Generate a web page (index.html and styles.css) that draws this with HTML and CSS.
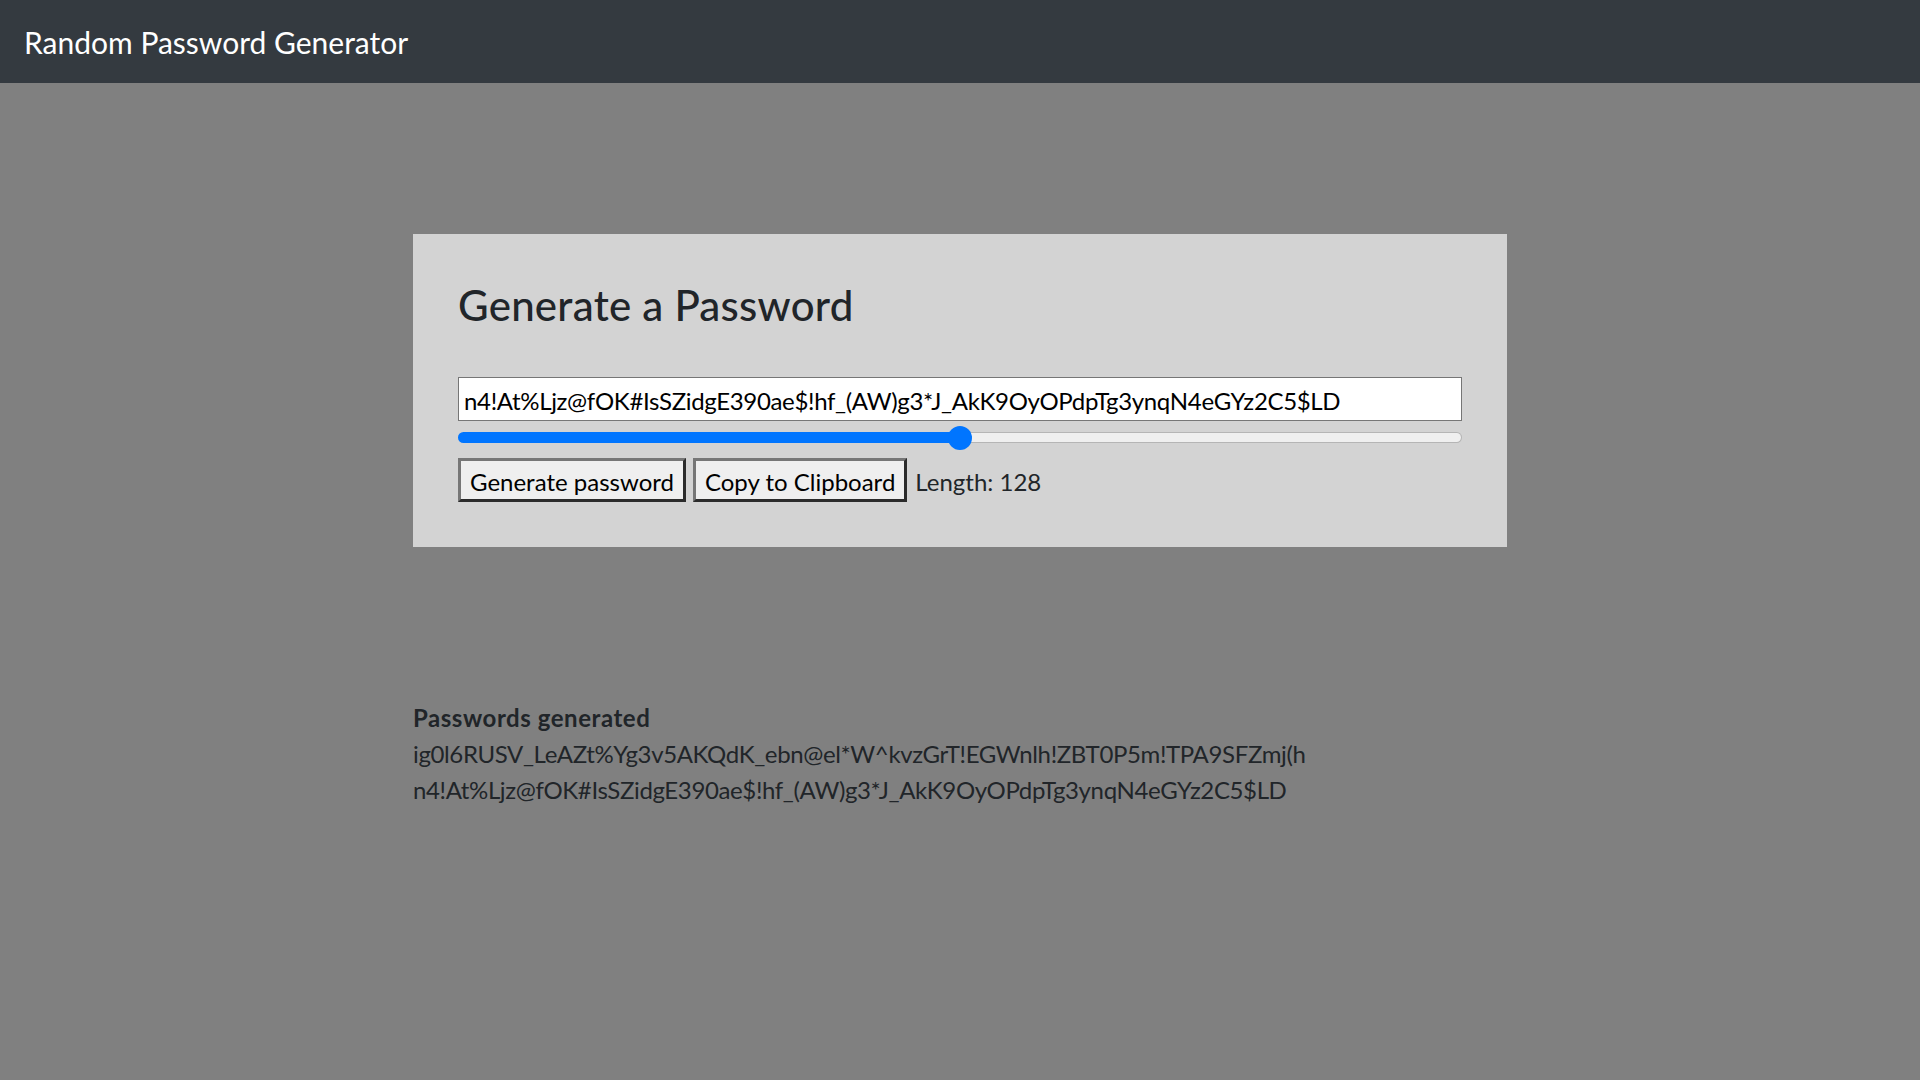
FILE: index.html
```html
<!DOCTYPE html>
<html lang="en">
<head>
<meta charset="utf-8">
<title>Random Password Generator</title>
<link rel="stylesheet" href="styles.css">
</head>
<body>
<nav class="navbar">
  <a class="brand" href="#">Random Password Generator</a>
</nav>
<main class="page">
  <section class="card">
    <h3 class="card-title">Generate a Password</h3>
    <input class="pw-field" type="text" value="n4!At%Ljz@fOK#IsSZidgE390ae$!hf_(AW)g3*J_AkK9OyOPdpTg3ynqN4eGYz2C5$LD">
    <input class="length-range" type="range" min="8" max="248" value="128">
    <div class="actions">
      <button class="btn" type="button">Generate password</button>
      <button class="btn" type="button">Copy to Clipboard</button>
      <span class="length-label">Length: 128</span>
    </div>
  </section>
  <section class="history">
    <div class="history-title">Passwords generated</div>
    <div class="history-item">ig0l6RUSV_LeAZt%Yg3v5AKQdK_ebn@el*W^kvzGrT!EGWnlh!ZBT0P5m!TPA9SFZmj(h</div>
    <div class="history-item">n4!At%Ljz@fOK#IsSZidgE390ae$!hf_(AW)g3*J_AkK9OyOPdpTg3ynqN4eGYz2C5$LD</div>
  </section>
</main>
</body>
</html>
```
FILE: styles.css
```css
* { box-sizing: border-box; }

html, body {
  margin: 0;
  padding: 0;
}

body {
  background: #808080;
  color: #212529;
  font-family: Lato, "Open Sans", sans-serif;
  font-size: 24px;
  line-height: 36px;
  min-height: 1080px;
}

.navbar {
  height: 83px;
  background: #343a40;
  display: flex;
  align-items: center;
  padding: 0 24px;
}

.brand {
  color: #ffffff;
  text-decoration: none;
  font-size: 30px;
  line-height: 45px;
  padding-top: 2px;
}

.page {
  width: 1094px;
  margin: 0 auto;
}

.card {
  margin-top: 151px;
  background: #d3d3d3;
  padding: 45px;
  display: flex;
  flex-direction: column;
}

.card-title {
  margin: 0 0 47px 0;
  padding-top: 1px;
  font-size: 42px;
  line-height: 50px;
  font-weight: 500;
  letter-spacing: 0.25px;
  color: #212529;
}

.pw-field {
  display: block;
  width: 100%;
  height: 44px;
  margin: 0;
  padding: 2px 5px 0 5px;
  border: 1px solid #767676;
  border-radius: 0;
  background: #ffffff;
  color: #000000;
  font-family: inherit;
  font-size: 24px;
  letter-spacing: -0.33px;
  outline: none;
}

.length-range {
  -webkit-appearance: none;
  appearance: none;
  display: block;
  width: 100%;
  height: 11px;
  margin: 11px 0 0 0;
  padding: 0;
  border: 1px solid transparent;
  border-radius: 6px;
  background: linear-gradient(to right, #0075ff 50%, transparent 50%) border-box,
              linear-gradient(#efefef, #efefef) padding-box,
              #b5b5b5;
  outline: none;
}

.length-range::-webkit-slider-thumb {
  -webkit-appearance: none;
  appearance: none;
  width: 24px;
  height: 24px;
  border: none;
  border-radius: 50%;
  background: #0075ff;
}

.actions {
  display: flex;
  align-items: center;
  gap: 7px;
  margin-top: 15px;
}

.btn {
  margin: 0;
  height: 44px;
  padding: 3px 9px 0 9px;
  border: 3px solid;
  border-color: #767676 #2b2b2b #2b2b2b #767676;
  border-radius: 0;
  background: #efefef;
  color: #000000;
  font-family: inherit;
  font-size: 24px;
  line-height: 36px;
}

.length-label {
  margin-left: 1px;
  padding-top: 4px;
  color: #212529;
}

.history {
  margin-top: 153px;
}

.history-title {
  font-weight: 700;
  letter-spacing: 0.55px;
}

.history-item {
  white-space: nowrap;
  letter-spacing: -0.37px;
}
```
